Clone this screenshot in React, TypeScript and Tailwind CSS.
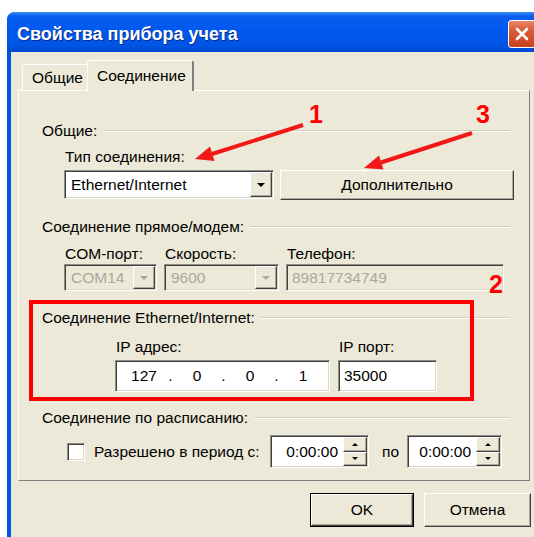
import React from "react";

type Box = { className?: string; children?: React.ReactNode };

// sunken 3D edit/combo frame
function Sunken({ className = "", children }: Box) {
  return (
    <div
      className={`border border-t-[#8e8d86] border-l-[#8e8d86] border-r-white border-b-white shadow-[inset_1px_1px_0_#404040,inset_-1px_-1px_0_#dcd8c6] ${className}`}
    >
      {children}
    </div>
  );
}

// raised 3D button face
function Raised({ className = "", children }: Box) {
  return (
    <div
      className={`flex items-center justify-center border border-t-white border-l-white border-r-[#404040] border-b-[#404040] bg-[#ece9d8] shadow-[inset_-1px_-1px_0_#aca899] ${className}`}
    >
      {children}
    </div>
  );
}

function Tri({ up, color = "#000", w = 8 }: { up?: boolean; color?: string; w?: number }) {
  const h = w / 2;
  return (
    <svg width={w} height={h} viewBox={`0 0 ${w} ${h}`}>
      <polygon points={up ? `0,${h} ${w},${h} ${w / 2},0` : `0,0 ${w},0 ${w / 2},${h}`} fill={color} />
    </svg>
  );
}

function Group({ title, className = "" }: { title: string; className?: string }) {
  return (
    <div className={`flex h-[20px] items-center gap-[6px] ${className}`}>
      <span className="whitespace-nowrap">{title}</span>
      <div className="mr-[4px] h-[2px] flex-1 border-t border-t-[#d0d0bf] border-b border-b-white" />
    </div>
  );
}

function Combo({ value, disabled, className = "" }: { value: string; disabled?: boolean; className?: string }) {
  return (
    <Sunken className={`flex items-stretch p-[1px] ${disabled ? "bg-[#ece9d8]" : "bg-white"} ${className}`}>
      <span className={`flex flex-1 items-center pl-[5px] ${disabled ? "text-[#aca899]" : ""}`}>{value}</span>
      <Raised className="w-[22px]">
        <Tri color={disabled ? "#aca899" : "#000"} />
      </Raised>
    </Sunken>
  );
}

function TimeBox({ value, className = "" }: { value: string; className?: string }) {
  return (
    <Sunken className={`flex items-stretch bg-white p-[1px] ${className}`}>
      <span className="flex flex-1 items-center justify-end pr-[5px]">{value}</span>
      <div className="flex w-[24px] flex-col">
        <Raised className="flex-1">
          <Tri up w={6} />
        </Raised>
        <Raised className="flex-1">
          <Tri w={6} />
        </Raised>
      </div>
    </Sunken>
  );
}

function IpPart({ v }: { v: string }) {
  return <span className="w-[40px] text-center">{v}</span>;
}

function Dot() {
  return <span className="w-[13px] text-center">.</span>;
}

export default function App() {
  return (
    <div className="relative h-[537px] w-[534px] overflow-hidden bg-white font-['Liberation_Sans',Arial,sans-serif] text-[15.5px] text-black">
      <div className="ml-[7px] mt-[12px] w-[540px] overflow-hidden rounded-t-[8px] bg-[#0055e5]">
        {/* caption */}
        <div className="flex h-[40px] items-center justify-between bg-[linear-gradient(180deg,#3d8df5_0%,#0a5ff0_10%,#0058ee_45%,#0054e3_85%,#0047cc_100%)] pl-[10px] pr-[11px] pt-[4px]">
          <span className="text-[18px] font-bold text-white [text-shadow:1px_1px_0_#0a2a8a]">
            Свойства прибора учета
          </span>
          <div className="flex h-[28px] w-[28px] items-center justify-center rounded-[3px] border border-white bg-[linear-gradient(180deg,#e8856a_0%,#d95a37_40%,#c8401c_100%)]">
            <svg width="16" height="16" viewBox="0 0 16 16">
              <path d="M3 3 L13 13 M13 3 L3 13" stroke="#fff" strokeWidth="2.6" strokeLinecap="round" />
            </svg>
          </div>
        </div>

        {/* dialog body */}
        <div className="mx-[4px] h-[485px] bg-[#ece9d8]">
          {/* tabs */}
          <div className="flex items-end pl-[11px] pt-[8px]">
            <div className="flex h-[26px] w-[65px] items-center rounded-tl-[3px] border-t border-l border-t-white border-l-white pl-[9px]">
              Общие
            </div>
            <div className="relative z-10 -mb-px flex h-[31px] w-[107px] items-center rounded-t-[3px] border-t border-l border-r-2 border-t-white border-l-white border-r-[#808080] bg-[#ece9d8] pl-[9px]">
              Соединение
            </div>
          </div>

          {/* tab page */}
          <div className="ml-[7px] flex h-[391px] w-[512px] flex-col border border-t-white border-l-white border-r-[#808080] border-b-[#808080] pl-[23px] pr-[15px] pt-[30px]">
            <Group title="Общие:" />
            <div className="ml-[23px] mt-[6px] flex h-[20px] items-center">Тип соединения:</div>
            <div className="ml-[22px] mt-[3px] flex h-[30px] items-start gap-[6px]">
              <Combo value="Ethernet/Internet" className="h-[29px] w-[210px]" />
              <Raised className="h-[30px] flex-1">Дополнительно</Raised>
            </div>

            <Group title="Соединение прямое/модем:" className="mt-[17px]" />
            <div className="ml-[22px] mt-[5px] grid h-[20px] grid-cols-[93px_115px_218px] items-center gap-x-[7px] pl-[1px]">
              <span>COM-порт:</span>
              <span>Скорость:</span>
              <span>Телефон:</span>
            </div>
            <div className="ml-[22px] mt-[2px] grid h-[26px] grid-cols-[93px_115px_218px] gap-x-[7px]">
              <Combo value="COM14" disabled />
              <Combo value="9600" disabled />
              <Sunken className="flex items-center pl-[5px] text-[#aca899]">89817734749</Sunken>
            </div>

            <Group title="Соединение Ethernet/Internet:" className="mt-[18px]" />
            <div className="ml-[73px] mt-[7px] grid h-[20px] grid-cols-[215px_99px] items-center gap-x-[8px] pl-[1px]">
              <span>IP адрес:</span>
              <span>IP порт:</span>
            </div>
            <div className="ml-[73px] mt-[5px] grid h-[32px] grid-cols-[215px_99px] gap-x-[8px]">
              <Sunken className="flex items-center bg-white pl-[8px]">
                <IpPart v="127" />
                <Dot />
                <IpPart v="0" />
                <Dot />
                <IpPart v="0" />
                <Dot />
                <IpPart v="1" />
              </Sunken>
              <Sunken className="flex items-center bg-white pl-[5px]">35000</Sunken>
            </div>

            <Group title="Соединение по расписанию:" className="mt-[16px]" />
            <div className="mt-[7px] flex h-[33px] items-center">
              <Sunken className="ml-[25px] h-[18px] w-[18px] bg-white" />
              <span className="ml-[9px] w-[176px]">Разрешено в период с:</span>
              <TimeBox value="0:00:00" className="h-[33px] w-[99px]" />
              <span className="ml-[13px] w-[25px]">по</span>
              <TimeBox value="0:00:00" className="h-[33px] w-[95px]" />
            </div>
          </div>

          {/* dialog buttons */}
          <div className="mt-[12px] flex justify-end gap-[10px] pr-[12px]">
            <div className="border border-black">
              <Raised className="h-[32px] w-[102px]">OK</Raised>
            </div>
            <Raised className="h-[34px] w-[107px]">Отмена</Raised>
          </div>
        </div>
      </div>

      {/* red annotations */}
      <svg className="pointer-events-none absolute inset-0" width="534" height="537" viewBox="0 0 534 537">
        <rect x="31" y="302" width="441" height="97" fill="none" stroke="#ff0000" strokeWidth="4" />
        <line x1="303" y1="125" x2="212" y2="154" stroke="#f21818" strokeWidth="4" />
        <polygon points="195,159 214.5,161 210,146.5" fill="#f21818" />
        <line x1="472" y1="133" x2="381" y2="162.5" stroke="#f21818" strokeWidth="4" />
        <polygon points="364,168 383.5,169.5 379,155.5" fill="#f21818" />
        <text x="309" y="123" fill="#ff0000" fontSize="25" fontWeight="bold" fontFamily="Liberation Sans, Arial, sans-serif">1</text>
        <text x="476" y="123" fill="#ff0000" fontSize="25" fontWeight="bold" fontFamily="Liberation Sans, Arial, sans-serif">3</text>
        <text x="489" y="293" fill="#ff0000" fontSize="25" fontWeight="bold" fontFamily="Liberation Sans, Arial, sans-serif">2</text>
      </svg>
    </div>
  );
}
